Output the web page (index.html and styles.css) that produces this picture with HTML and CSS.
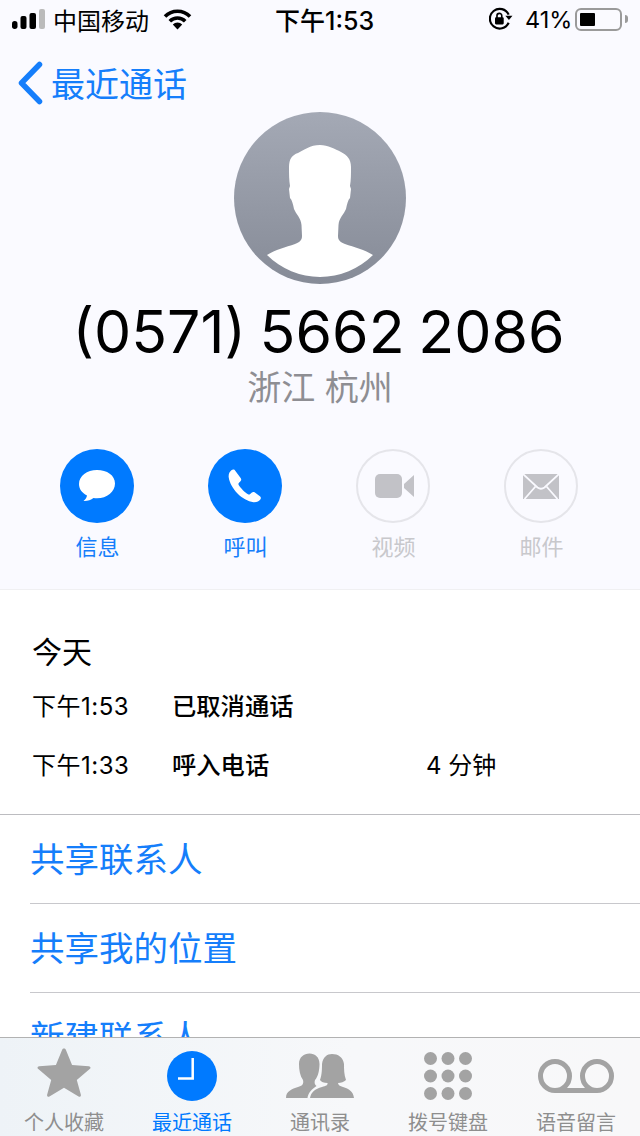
FILE: index.html
```html
<!DOCTYPE html>
<html lang="zh-CN">
<head>
  <meta charset="UTF-8">
  <meta name="viewport" content="width=device-width, initial-scale=1.0">
  <title>最近通话</title>
  <link rel="stylesheet" href="styles.css">
</head>
<body>
  <div class="phone">
    <!-- Status bar -->
    <div class="status-bar">
      <div class="status-left">
        <svg class="signal" width="33" height="20" viewBox="0 0 33 20">
          <rect x="0" y="12" width="5.500" height="8" rx="2.700" fill="#000"/>
          <rect x="8.500" y="7" width="6" height="13" rx="2" fill="#000"/>
          <rect x="17.500" y="4" width="6.500" height="16" rx="2" fill="#000"/>
          <rect x="27" y="0" width="6" height="20" rx="2" fill="#bbb"/>
        </svg>
        <span class="carrier">中国移动</span>
        <svg class="wifi" width="29" height="21" viewBox="0 0 29 21">
          <path d="M2 7.500A17.500 17.500 0 0 1 27 7.500" fill="none" stroke="#000" stroke-width="3.600"/>
          <path d="M6.800 12.300A10.800 10.800 0 0 1 22.200 12.300" fill="none" stroke="#000" stroke-width="3.600"/>
          <path d="M14.500 20.500 9.800 15.500A6.700 6.700 0 0 1 19.200 15.500z" fill="#000"/>
        </svg>
      </div>
      <div class="status-time">下午1:53</div>
      <div class="status-right">
        <svg class="lock" width="24" height="24" viewBox="2 1 22 22">
          <path d="M20 15.500A9 9 0 1 1 20 8" fill="none" stroke="#000" stroke-width="2"/>
          <path d="M17 9h6.500l-3.200 4z" fill="#000"/>
          <rect x="7.500" y="10.500" width="8" height="6.500" rx="1" fill="#000"/>
          <path d="M9.300 11V9a2.200 2.200 0 0 1 4.400 0v2" fill="none" stroke="#000" stroke-width="1.500"/>
        </svg>
        <span class="battery-text">41%</span>
        <div class="battery"><div class="battery-fill" style="width: 41%"></div></div>
        <div class="battery-tip"></div>
      </div>
    </div>

    <!-- Contact header -->
    <div class="header">
      <a class="back">
        <svg width="26" height="44" viewBox="0 0 26 44">
          <path d="M22.500 3.500 4.500 22l18 18.500" fill="none" stroke="#157efb" stroke-width="5.500" stroke-linecap="round" stroke-linejoin="round"/>
        </svg>
        <span>最近通话</span>
      </a>
      <div class="avatar">
        <svg width="172" height="172" viewBox="0 0 172 172">
          <defs>
            <linearGradient id="avatarBg" x1="0" y1="0" x2="0" y2="1">
              <stop offset="0" stop-color="#a4a9b5"/>
              <stop offset="1" stop-color="#868b97"/>
            </linearGradient>
          </defs>
          <circle cx="86" cy="86" r="86" fill="url(#avatarBg)"/>
          <path d="M33 143C41 138 52 135 61 132C66 130 68 128 68 124L67.500 113C67 106 62 102 60 97C59 92 58 88 56 86L55 77L56 74C55 68 55 62 55 55C55 47 58 43 64 41C70 38 76 33 86 33C94 33 101 37 107 40C113 43 117 47 117 55C117 62 117 68 116 74L117 77L116 86C114 88 113 92 112 97C110 102 105 106 104.500 113L104 124C104 128 106 130 111 132C120 135 131 138 139 143A75 75 0 0 1 33 143z" fill="#fff"/>
        </svg>
      </div>
      <div class="number">(0571) 5662 2086</div>
      <div class="region">浙江 杭州</div>
      <div class="actions">
        <div class="action">
          <div class="action-circle">
            <svg width="38" height="34" viewBox="0 0 38 34">
              <path d="M19 1C9 1 1 7 1 15c0 5 3 9 8 11.500-.3 2-1.500 4-3.500 5.500 3.500.3 7.500-1 10-3 1 .2 2.300.3 3.500.3 10 0 18-6.500 18-14.800S29 1 19 1z" fill="#fff"/>
            </svg>
          </div>
          <span class="action-label">信息</span>
        </div>
        <div class="action">
          <div class="action-circle">
            <svg width="34" height="34" viewBox="0 0 34 34">
              <path d="M6.500.8c-1-.6-2-.5-2.800.1C1.600 2.500.3 5 .7 8.300 1.500 14 5 20 9.500 24.500 14 29 20 32.500 25.500 33.200c3 .3 5.500-.9 7-3 .6-.9.5-1.900-.3-2.600l-5.600-4.300c-.9-.6-1.900-.5-2.700.1l-1.700 1.700c-.6.6-1.500.7-2.200.2-3-1.900-7.400-6.300-9.300-9.400-.4-.7-.3-1.600.3-2.200l1.700-1.800c.7-.8.7-1.800.1-2.700z" fill="#fff"/>
            </svg>
          </div>
          <span class="action-label">呼叫</span>
        </div>
        <div class="action disabled">
          <div class="action-circle">
            <svg class="icon-video" width="39" height="26" viewBox="0 0 39 26">
              <rect x="0" y="1" width="27" height="24" rx="5" fill="#c2c2c7"/>
              <path d="M29 11 39 2v22l-10-9z" fill="#c2c2c7"/>
            </svg>
          </div>
          <span class="action-label">视频</span>
        </div>
        <div class="action disabled">
          <div class="action-circle">
            <svg width="36" height="25" viewBox="0 0 36 25">
              <rect x="0" y="0" width="36" height="25" fill="#c2c2c7"/>
              <path d="M0 0 14.500 13.500Q18 16 21.500 13.500L36 0" fill="none" stroke="#fafaff" stroke-width="1.800"/>
              <path d="M1.500 25 12.500 12.500M34.500 25 23.500 12.500" fill="none" stroke="#fafaff" stroke-width="1.800"/>
            </svg>
          </div>
          <span class="action-label">邮件</span>
        </div>
      </div>
    </div>

    <!-- Call history and actions -->
    <div class="detail">
      <div class="history">
        <div class="history-date">今天</div>
        <div class="call-row">
          <span class="call-time">下午1:53</span>
          <span class="call-type">已取消通话</span>
        </div>
        <div class="call-row">
          <span class="call-time">下午1:33</span>
          <span class="call-type">呼入电话</span>
          <span class="call-length">4 分钟</span>
        </div>
      </div>
      <ul class="links">
        <li>共享联系人</li>
        <li>共享我的位置</li>
        <li>新建联系人</li>
      </ul>
    </div>

    <!-- Tab bar -->
    <div class="tabbar">
      <div class="tab">
        <svg class="icon-star" width="54" height="51" viewBox="0 0 58 55">
          <path d="M29 1.500c1 0 1.500.5 2 1.500l6.700 16.500 18 1.300c2 .2 2.500 1.800 1 3L42.800 35.500l4.400 16c.4 1.700-1 2.800-2.500 1.800L29 44 13.300 53.300c-1.500 1-2.900-.1-2.500-1.800l4.400-16L1.300 23.800c-1.500-1.200-1-2.800 1-3l18-1.300L27 3c.5-1 1-1.500 2-1.500z" fill="#a3a3a3"/>
        </svg>
        <span>个人收藏</span>
      </div>
      <div class="tab active">
        <svg class="icon-clock" width="50" height="50" viewBox="0 0 50 50">
          <circle cx="25" cy="25" r="25" fill="#007aff"/>
          <path d="M25.700 7v20.500H11" fill="none" stroke="#fff" stroke-width="2.500"/>
        </svg>
        <span>最近通话</span>
      </div>
      <div class="tab">
        <svg class="icon-contacts" width="68" height="45" viewBox="0 0 68 45">
          <path d="M0 45C0 38 6 36 12 34C16 33 18 31 17 27C14 23 13 17 13 11C13 4 18 .5 23.500 .5C29 .5 33.500 4 33.500 11C33.500 17 32 24 29 27C28 30 29 32 30.500 33C26 36 22 40 21.500 45z" fill="#a3a3a3"/>
          <path d="M24 45C25 39 29 36 36 34C40 33 42 32 41.500 30C38 30 35 29 34 27C36 22 36 15 36 11C37 4 41 1 46 1C52 1 57 4 58 11C58 16 58 22 60 27C58 29 55 30 52 30C52 32 54 33 57 34C63 36 67 38 68 45z" fill="#a3a3a3"/>
        </svg>
        <span>通讯录</span>
      </div>
      <div class="tab">
        <svg class="icon-keypad" width="48" height="48" viewBox="0 0 48 48">
          <g fill="#a3a3a3">
            <circle cx="6.500" cy="6.500" r="6.500"/><circle cx="24" cy="6.500" r="6.500"/><circle cx="41.500" cy="6.500" r="6.500"/>
            <circle cx="6.500" cy="24" r="6.500"/><circle cx="24" cy="24" r="6.500"/><circle cx="41.500" cy="24" r="6.500"/>
            <circle cx="6.500" cy="41.500" r="6.500"/><circle cx="24" cy="41.500" r="6.500"/><circle cx="41.500" cy="41.500" r="6.500"/>
          </g>
        </svg>
        <span>拨号键盘</span>
      </div>
      <div class="tab">
        <svg class="icon-voicemail" width="76" height="34" viewBox="0 0 76 34">
          <circle cx="17" cy="17" r="14.500" fill="none" stroke="#a3a3a3" stroke-width="5"/>
          <circle cx="59" cy="17" r="14.500" fill="none" stroke="#a3a3a3" stroke-width="5"/>
          <rect x="17" y="29" width="42" height="5" fill="#a3a3a3"/>
        </svg>
        <span>语音留言</span>
      </div>
    </div>
  </div>
</body>
</html>
```

FILE: styles.css
```css
/* General Styles */
* {
  box-sizing: border-box;
}

body {
  margin: 0;
  font-family: "Liberation Sans", "Noto Sans CJK SC", sans-serif;
  background-color: #fff;
}

.phone {
  position: relative;
  width: 640px;
  height: 1136px;
  overflow: hidden;
  background-color: #fff;
}

/* Status Bar */
.status-bar {
  height: 40px;
  padding: 0 11px 2px 12px;
  display: flex;
  align-items: center;
  background-color: #fafaff;
  color: #000;
}

.status-left {
  width: 263px;
  display: flex;
  align-items: center;
}

.signal {
  margin-right: 8px;
}

.carrier {
  font-size: 24px;
  margin-right: 14px;
}

.status-time {
  font-family: Inter, "Noto Sans CJK SC", sans-serif;
  font-size: 25px;
  font-weight: 500;
}

.status-right {
  width: 140px;
  margin-left: auto;
  display: flex;
  align-items: center;
}

.battery-text {
  width: 45px;
  font-family: Inter, "Liberation Sans", sans-serif;
  font-size: 23.500px;
  margin: 0 5px 0 12px;
  flex-shrink: 0;
}

.battery {
  width: 47px;
  height: 23px;
  padding: 3px;
  border: 2px solid #9a9a9a;
  border-radius: 6px;
}

.battery-fill {
  height: 100%;
  background-color: #000;
  border-radius: 1px;
}

.battery-tip {
  width: 3px;
  height: 8px;
  margin-left: 3px;
  background-color: #9a9a9a;
  border-radius: 0 3px 3px 0;
}

/* Header */
.header {
  height: 550px;
  display: flex;
  flex-direction: column;
  align-items: center;
  background-color: #fafaff;
  border-bottom: 1px solid #f0f0f2;
}

.back {
  align-self: flex-start;
  height: 44px;
  margin: 21px 0 0 17px;
  display: flex;
  align-items: center;
  gap: 8px;
  color: #157efb;
  font-size: 34px;
}

.back span {
  margin-bottom: 2px;
}

.avatar {
  height: 172px;
  margin-top: 7px;
}

.number {
  margin: 12px 3px 0 0;
  font-family: Inter, "Liberation Sans", sans-serif;
  font-size: 59px;
  line-height: 72px;
  word-spacing: -3px;
  color: #000;
}

.region {
  font-size: 34px;
  line-height: 40px;
  color: #8e8e93;
}

.actions {
  width: 594px;
  margin-top: 41px;
  display: grid;
  grid-template-columns: repeat(4, 148px);
}

.action {
  display: flex;
  flex-direction: column;
  align-items: center;
  gap: 10px;
  color: #157efb;
}

.action-circle {
  width: 74px;
  height: 74px;
  border-radius: 50%;
  display: flex;
  align-items: center;
  justify-content: center;
  background-color: #007aff;
}

.action.disabled {
  color: #c8c8cc;
}

.action.disabled .action-circle {
  background-color: transparent;
  border: 2px solid #e5e5ea;
}

.icon-video {
  margin-left: 2px;
}

.action-label {
  padding-left: 1px;
  font-size: 22px;
  line-height: 30px;
}

/* Call History */
.history {
  height: 225px;
  padding: 41px 0 0 32px;
  border-bottom: 1px solid #bcbcc0;
}

.history-date {
  font-size: 30px;
  line-height: 44px;
  margin-bottom: -1px;
  color: #000;
}

.call-row {
  height: 60px;
  display: flex;
  align-items: center;
  color: #000;
  font-family: Inter, "Noto Sans CJK SC", sans-serif;
  font-size: 24px;
  margin-top: -1px;
}

.call-time {
  width: 140px;
  letter-spacing: .5px;
}

.call-type {
  width: 254px;
  font-size: 24.300px;
  font-weight: 500;
}

/* Link Rows */
.links {
  margin: 0;
  padding: 0 0 0 30px;
  list-style: none;
}

.links li {
  height: 89px;
  line-height: 90px;
  font-size: 34.500px;
  color: #157efb;
  border-bottom: 1px solid #c8c8cc;
}

/* Tab Bar */
.tabbar {
  position: absolute;
  left: 0;
  right: 0;
  bottom: 0;
  height: 99px;
  display: grid;
  grid-template-columns: repeat(5, 128px);
  background: linear-gradient(90deg, #eef3f7, #f7f8fa 55%, #f8f8f9);
  border-top: 1px solid #b2b2b2;
}

.tab {
  height: 98px;
  display: flex;
  flex-direction: column;
  align-items: center;
  justify-content: flex-end;
  color: #8e8e8e;
  font-size: 20px;
  line-height: 25px;
  overflow: hidden;
}

.tab svg {
  margin-bottom: auto;
}

.tab.active {
  color: #007aff;
}

.icon-star {
  margin-top: 9px;
}

.icon-clock {
  margin-top: 13px;
}

.icon-contacts {
  margin-top: 15px;
}

.icon-keypad {
  margin-top: 14px;
}

.icon-voicemail {
  margin-top: 21px;
}
```
